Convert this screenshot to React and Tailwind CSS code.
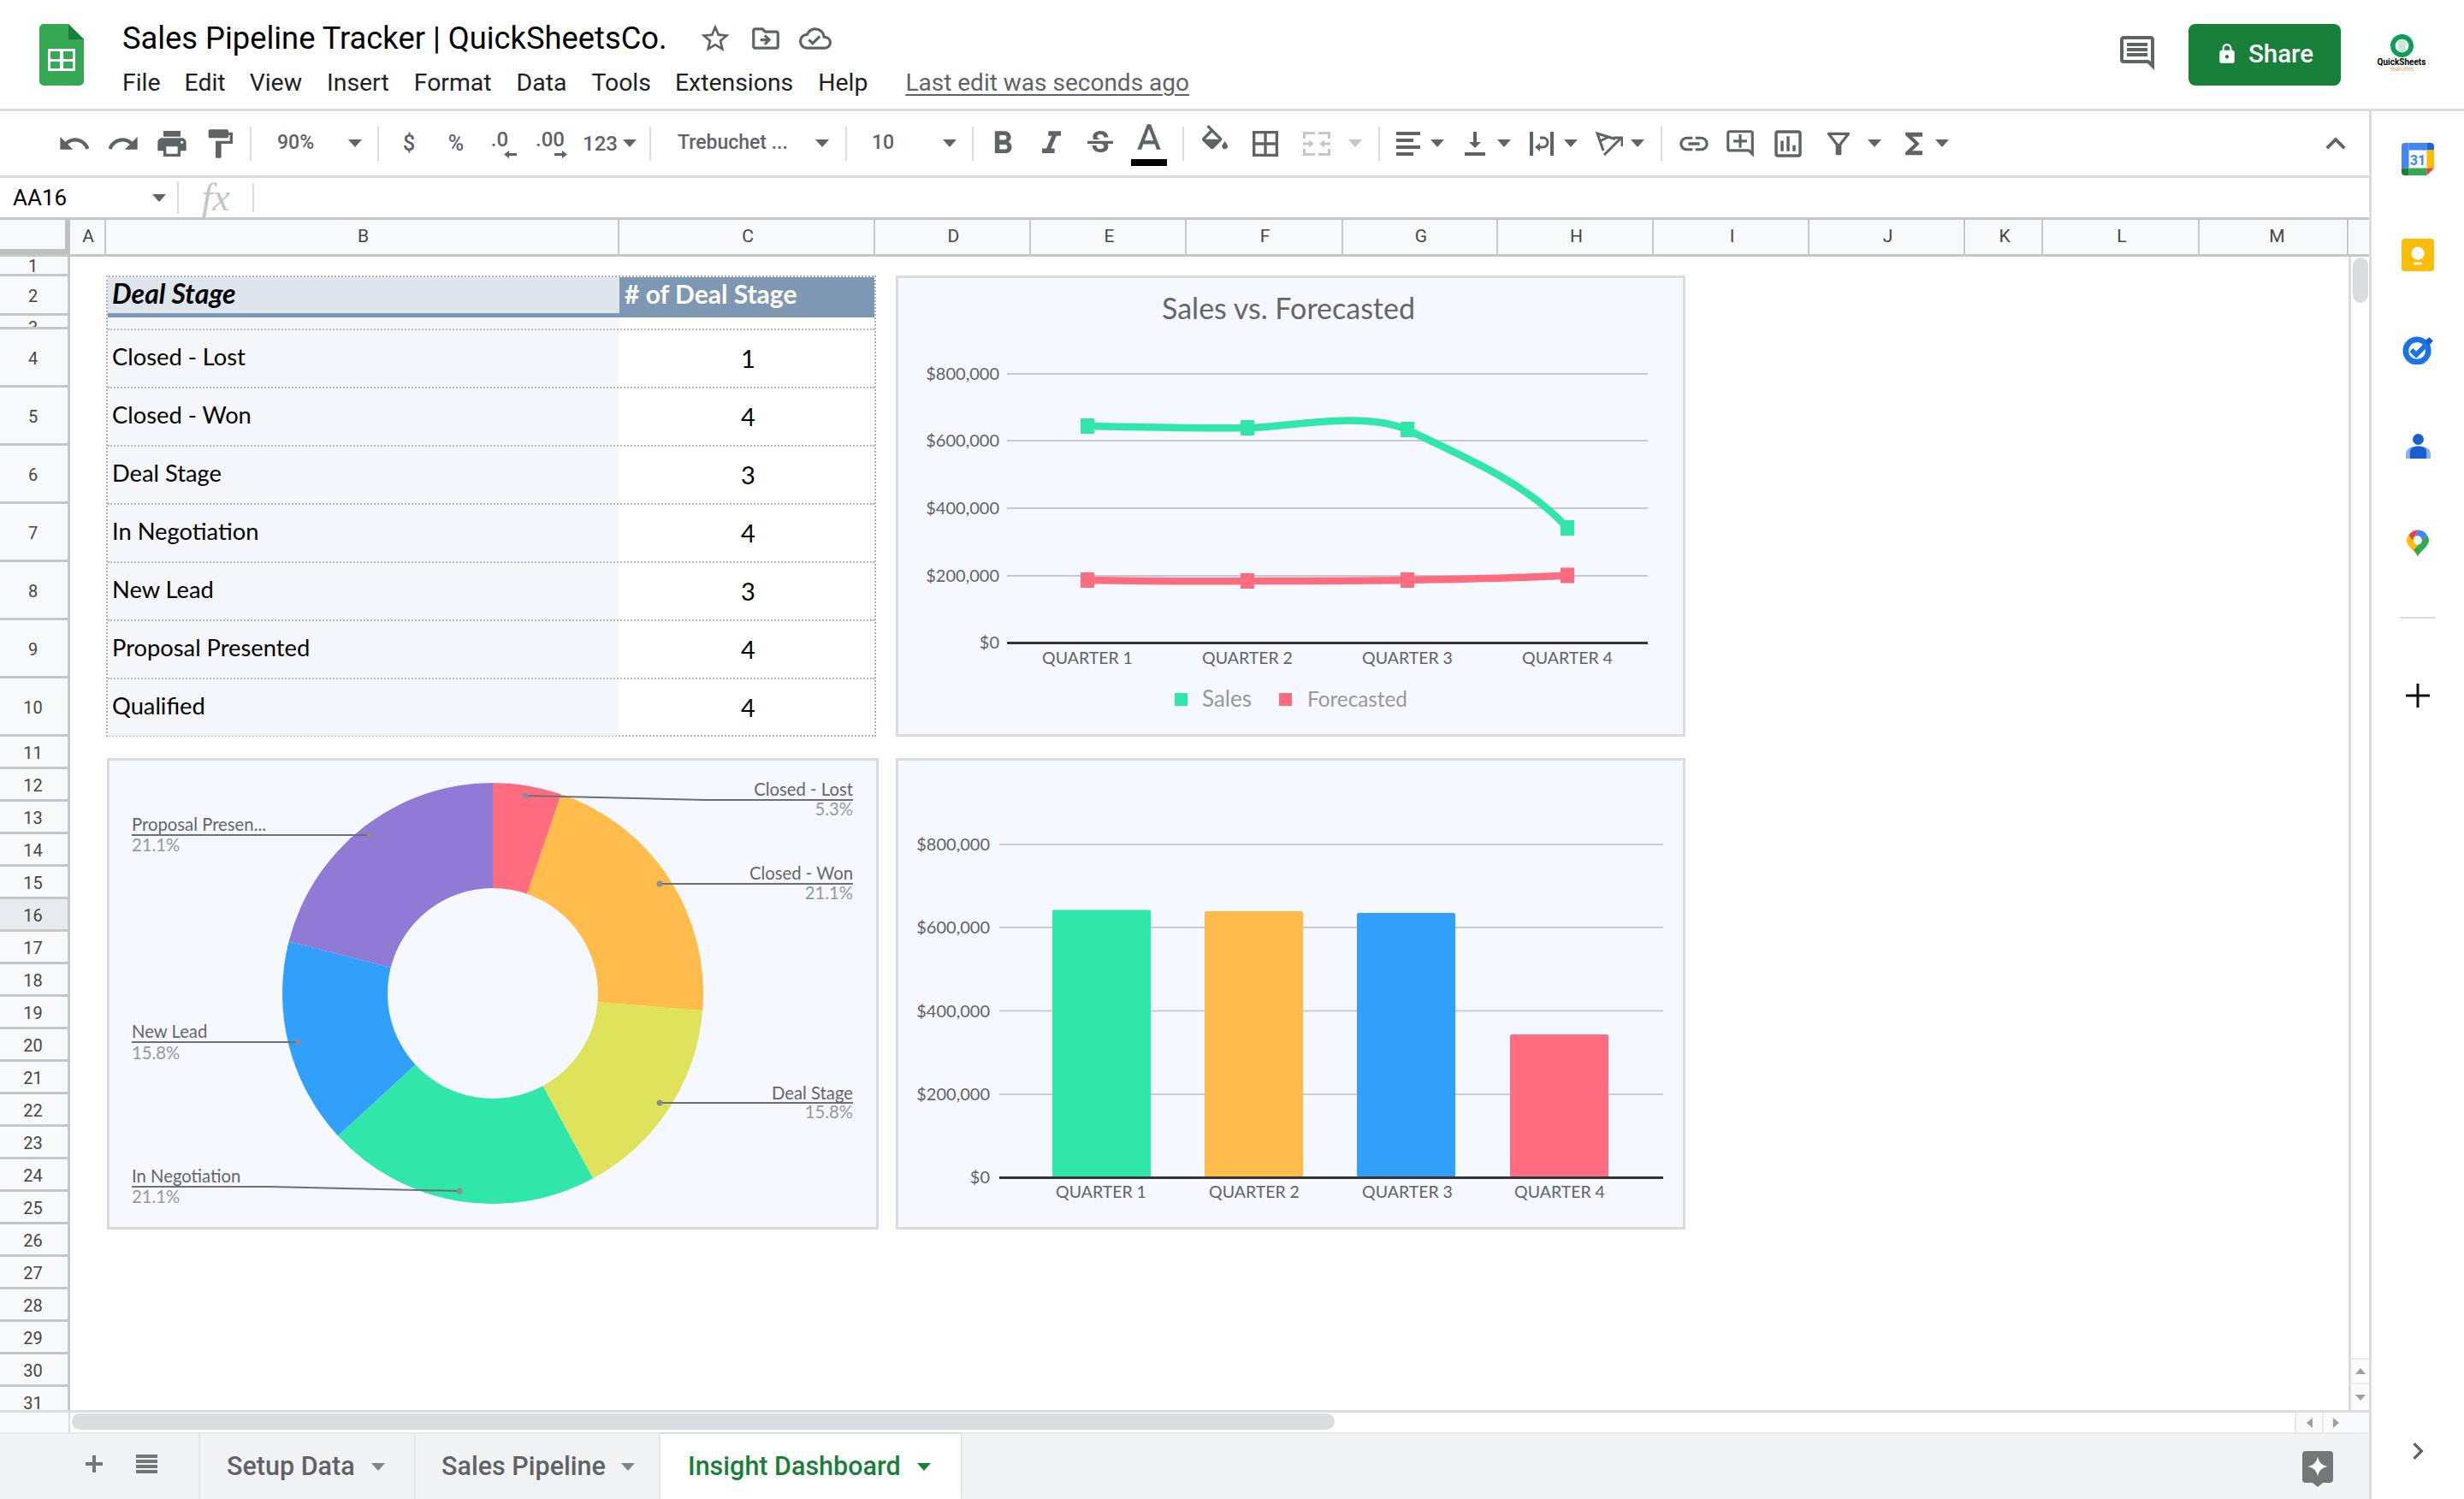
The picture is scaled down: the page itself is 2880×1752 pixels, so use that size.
import React from 'react';
import {
  MdUndo, MdRedo, MdPrint, MdFormatPaint, MdFormatBold, MdFormatItalic, MdStrikethroughS,
  MdBorderAll, MdLink,
  MdOutlineAddComment, MdOutlineInsertChart, MdOutlineFilterAlt, MdFunctions, MdStarBorder,
  MdOutlineDriveFileMove, MdOutlineCloudDone, MdOutlineComment, MdLock, MdExpandLess,
  MdChevronRight,
} from 'react-icons/md';

const GREEN = '#30e6a8';
const ORANGE = '#ffbc4a';
const BLUE = '#31a0fa';
const RED = '#ff6b7f';
const YELLOW = '#dfe35b';
const PURPLE = '#8f7bd6';

const columns = [
  { name: 'A', cls: 'w-[42px] pl-[2px]' },
  { name: 'B', cls: 'w-[600px] pl-[3px]' },
  { name: 'C', cls: 'w-[299px] pl-[3px]' },
  { name: 'D', cls: 'w-[182px] pl-[3px]' },
  { name: 'E', cls: 'w-[182px] pl-[3px]' },
  { name: 'F', cls: 'w-[183px] pl-[2px]' },
  { name: 'G', cls: 'w-[181px] pl-[3px]' },
  { name: 'H', cls: 'w-[182px] pl-[3px]' },
  { name: 'I', cls: 'w-[182px] pl-[3px]' },
  { name: 'J', cls: 'w-[182px] pl-[3px]' },
  { name: 'K', cls: 'w-[91px] pl-[3px]' },
  { name: 'L', cls: 'w-[183px] pl-[3px]' },
  { name: 'M', cls: 'w-[174px] pl-[9px]' },
];

const menus = [
  { name: 'File', cls: 'ml-0' },
  { name: 'Edit', cls: 'ml-[28px]' },
  { name: 'View', cls: 'ml-[28px]' },
  { name: 'Insert', cls: 'ml-[29px]' },
  { name: 'Format', cls: 'ml-[29px]' },
  { name: 'Data', cls: 'ml-[29px]' },
  { name: 'Tools', cls: 'ml-[29px]' },
  { name: 'Extensions', cls: 'ml-[28px]' },
  { name: 'Help', cls: 'ml-[29px]' },
];

const rows = [
  ['Closed - Lost', 1],
  ['Closed - Won', 4],
  ['Deal Stage', 3],
  ['In Negotiation', 4],
  ['New Lead', 3],
  ['Proposal Presented', 4],
  ['Qualified', 4],
];

const rowHeight = (n) => {
  if (n === 1) return 'h-[23px]';
  if (n === 2) return 'h-[46px]';
  if (n === 3) return 'h-[16px] items-start';
  if (n >= 4 && n <= 10) return 'h-[68px]';
  return 'h-[38px]';
};

const Caret = ({ className = '', color = '#5f6368' }) => (
  <svg width="16" height="9" viewBox="0 0 16 9" className={`shrink-0 ${className}`}>
    <path d="M0 0h16L8 9z" fill={color} />
  </svg>
);

const Sep = ({ className = '' }) => <div className={`h-[40px] w-[2px] shrink-0 bg-[#dadce0] ${className}`} />;

const Slot = ({ className, children }) => (
  <div className={`flex h-[44px] shrink-0 items-center justify-center text-[#5f6368] ${className}`}>{children}</div>
);

const Dropdown = ({ className, children }) => (
  <div className={`flex shrink-0 items-center justify-between text-[23px] font-medium text-[#5f6368] ${className}`}>
    <span>{children}</span>
    <Caret />
  </div>
);

const DecimalArrow = ({ flip }) => (
  <svg width="15" height="9" viewBox="0 0 15 9" className={`ml-[25px] ${flip ? 'rotate-180' : ''}`}>
    <path d="M0 4.500L6 0v3h9v3H6v3z" fill="#5f6368" />
  </svg>
);

const SheetsLogo = () => (
  <svg width="52" height="72" viewBox="0 0 52 72" className="shrink-0">
    <path d="M5 0h29l18 18v49a5 5 0 0 1-5 5H5a5 5 0 0 1-5-5V5a5 5 0 0 1 5-5z" fill="#34a853" />
    <path d="M34 0l18 18H34z" fill="#188038" />
    <path d="M10 29h32v26H10z" fill="#fff" />
    <path d="M13 32h11v9H13zM28 32h11v9H28zM13 44h11v8H13zM28 44h11v8H28z" fill="#34a853" />
  </svg>
);

const CalendarIcon = () => (
  <svg width="38" height="38" viewBox="0 0 40 40">
    <path d="M9 0h22v9H9z" fill="#4285f4" />
    <path d="M0 4a4 4 0 0 1 4-4h5v31H0z" fill="#4285f4" />
    <path d="M31 0h5a4 4 0 0 1 4 4v5h-9z" fill="#1967d2" />
    <path d="M31 9h9v22h-9z" fill="#fbbc04" />
    <path d="M9 31h22v9H9z" fill="#34a853" />
    <path d="M0 31h9v9H4a4 4 0 0 1-4-4z" fill="#188038" />
    <path d="M31 31h9l-9 9z" fill="#ea4335" />
    <text x="20" y="27" textAnchor="middle" fontSize="17" fontWeight="700" fill="#4285f4" className="font-['Roboto',sans-serif]">31</text>
  </svg>
);

const KeepIcon = () => (
  <svg width="38" height="38" viewBox="0 0 40 40">
    <rect width="40" height="40" rx="4" fill="#fbbc04" />
    <circle cx="20" cy="18" r="8" fill="#fff" />
    <path d="M15 29h10v3H15z" fill="#fff" />
  </svg>
);

const TasksIcon = () => (
  <svg width="36" height="34" viewBox="0 0 38 36">
    <circle cx="18" cy="19" r="14" fill="none" stroke="#1a73e8" strokeWidth="7" />
    <path d="M11 18l6 6 17-17" fill="none" stroke="#1a73e8" strokeWidth="6" />
    <path d="M27 8l6-6 5 5-6 6z" fill="#1a5fd0" />
  </svg>
);

const ContactsIcon = () => (
  <svg width="29" height="33" viewBox="0 0 36 36">
    <path d="M0 36v-6c0-8 6-12 18-12s18 4 18 12v6z" fill="#8ab0f5" />
    <circle cx="18" cy="8" r="8" fill="#1a5fd0" />
    <path d="M6 36V26c0-5 5-8 12-8s12 3 12 8v10z" fill="#1a5fd0" />
  </svg>
);

const MapsIcon = () => (
  <svg width="26" height="34" viewBox="0 0 32 38">
    <path d="M16 38C13 30 0 24 0 15 0 12 1 9 3 7l23 19c-4 4-8 7-10 12z" fill="#fbbc04" />
    <path d="M3 7C6 3 11 0 16 0l-5 10-3 4z" fill="#ea4335" />
    <path d="M16 0c5 0 10 2 13 7L21 17c1-5-2-9-5-9-2 0-4 1-5 2z" fill="#4285f4" />
    <path d="M29 7c2 2 3 5 3 8 0 9-13 15-16 23-1-3-3-6-6-9l19-22z" fill="#34a853" />
    <circle cx="16" cy="15" r="6" fill="#fff" />
  </svg>
);

const MergeIcon = () => (
  <svg width="32" height="28" viewBox="0 0 32 28" fill="#c4c7c5">
    <path d="M0 0h14v3H3v5H0zM18 0h14v8h-3V3H18zM0 20h3v5h11v3H0zM29 20h3v8H18v-3h11z" />
    <path d="M0 12.500h7v-3l6 4.500-6 4.500v-3H0zM32 12.500h-7v-3l-6 4.500 6 4.500v-3h7z" />
  </svg>
);

const AlignIcon = () => (
  <svg width="28" height="28" viewBox="0 0 28 28" fill="#5f6368">
    <path d="M0 0h28v4H0zM0 8h20v4H0zM0 16h28v4H0zM0 24h20v4H0z" />
  </svg>
);

const ValignIcon = () => (
  <svg width="24" height="28" viewBox="0 0 24 28" fill="#5f6368">
    <path d="M10 0h4v12h5l-7 7-7-7h5zM0 24h24v4H0z" />
  </svg>
);

const WrapIcon = () => (
  <svg width="28" height="28" viewBox="0 0 28 28">
    <path d="M0 0h4v28H0zM24 0h4v28h-4z" fill="#5f6368" />
    <path d="M12 7h3.500a5.500 5.500 0 0 1 0 11H10" fill="none" stroke="#5f6368" strokeWidth="3" />
    <path d="M6 18l6-5v10z" fill="#5f6368" />
  </svg>
);

const RotateIcon = () => (
  <svg width="32" height="28" viewBox="0 0 32 28" fill="none" stroke="#5f6368" strokeWidth="3">
    <path d="M23 8.500L2 2l7 20" />
    <path d="M5 11l10-5" />
    <path d="M10 27L30 7" />
    <path d="M21 7h10v10" />
  </svg>
);

const FillIcon = () => (
  <svg width="40" height="40" viewBox="0 0 24 24" fill="#5f6368" className="-mt-[4px]">
    <path d="M16.560 8.940L7.620 0 6.210 1.410l2.380 2.380-5.150 5.150c-.59.59-.59 1.540 0 2.120l5.500 5.500c.29.29.68.44 1.060.44s.77-.15 1.060-.44l5.500-5.500c.59-.58.59-1.530 0-2.120zM5.210 10L10 5.210 14.790 10H5.210zM19 11.500s-2 2.170-2 3.500c0 1.100.9 2 2 2s2-.9 2-2c0-1.330-2-3.500-2-3.500z" />
  </svg>
);

const TextColorIcon = () => (
  <div className="flex h-[52px] flex-col items-center justify-between">
    <svg width="38" height="38" viewBox="3 2 18 17" fill="#5f6368">
      <path d="M11 3L5.500 17h2.250l1.120-3h6.250l1.120 3h2.250L13 3h-2zm-1.380 9L12 5.670 14.380 12H9.620z" />
    </svg>
    <div className="h-[8px] w-[42px] bg-black" />
  </div>
);

const Sparkle = () => (
  <svg width="36" height="42" viewBox="0 0 36 42">
    <path d="M4 0h28a4 4 0 0 1 4 4v29a4 4 0 0 1-4 4h-8l-6 5-6-5H4a4 4 0 0 1-4-4V4a4 4 0 0 1 4-4z" fill="#747775" />
    <path d="M18 6c1 7 5 11 12 12-7 1-11 5-12 12-1-7-5-11-12-12 7-1 11-5 12-12z" fill="#fff" />
  </svg>
);

const Header = () => (
  <header className="flex h-[130px] shrink-0 items-start border-b-[3px] border-[#dadce0]">
    <div className="ml-[46px] mt-[28px]"><SheetsLogo /></div>
    <div className="ml-[45px] flex flex-col">
      <div className="mt-[22px] flex h-[46px] items-center">
        <span className="text-[36.300px] leading-none text-black">Sales Pipeline Tracker | QuickSheetsCo.</span>
        <div className="ml-[36px] flex items-center gap-[20px] text-[#5f6368]">
          <MdStarBorder size={40} />
          <MdOutlineDriveFileMove size={38} />
          <MdOutlineCloudDone size={38} />
        </div>
      </div>
      <div className="mt-[10px] flex h-[38px] items-center text-[28.400px] leading-none text-[#202124]">
        {menus.map((m) => (
          <span key={m.name} className={m.cls}>{m.name}</span>
        ))}
        <span className="ml-[44px] text-[28px] text-[#5f6368] underline underline-offset-[4px]">Last edit was seconds ago</span>
      </div>
    </div>
    <div className="ml-auto flex items-start">
      <div className="mr-[36px] mt-[38px] text-[#5f6368]"><MdOutlineComment size={48} /></div>
      <div className="mt-[28px] flex h-[72px] w-[178px] items-center justify-center gap-[12px] rounded-[8px] bg-[#188038] pb-[2px] text-[29.500px] font-medium text-white">
        <MdLock size={26} />
        <span>Share</span>
      </div>
      <div className="ml-[43px] mr-[45px] mt-[40px] flex w-[56px] flex-col items-center">
        <svg width="27" height="27" viewBox="0 0 24 24">
          <circle cx="12" cy="12" r="9.500" fill="#fff" stroke="#0f9d58" strokeWidth="5" />
          <rect x="8" y="6" width="8" height="12" rx="1" fill="#c9e8d6" />
        </svg>
        <span className="mt-[1px] whitespace-nowrap text-[10px] font-bold leading-[10px] text-black">QuickSheets</span>
        <span className="whitespace-nowrap text-[5px] leading-[6px] text-[#e08a4a]">TEMPLATES</span>
      </div>
    </div>
  </header>
);

const Toolbar = () => (
  <div className="flex h-[78px] shrink-0 items-center border-b-[3px] border-[#dadce0] pl-[58px] pr-[16px]">
    <Slot className="w-[57px]"><MdUndo size={40} /></Slot>
    <Slot className="w-[57px]"><MdRedo size={40} /></Slot>
    <Slot className="w-[57px]"><MdPrint size={40} /></Slot>
    <Slot className="w-[56px]"><MdFormatPaint size={40} /></Slot>
    <Sep className="ml-[7px]" />
    <Dropdown className="w-[147px] pl-[30px] pr-[18px]">90%</Dropdown>
    <Sep />
    <Slot className="ml-[7px] w-[56px] text-[25px] font-medium">$</Slot>
    <Slot className="w-[54px] text-[25px] font-medium">%</Slot>
    <Slot className="w-[48px] flex-col text-[24px] font-medium leading-[26px]">.0<DecimalArrow /></Slot>
    <Slot className="w-[70px] flex-col text-[24px] font-medium leading-[26px]">.00<DecimalArrow flip /></Slot>
    <Slot className="w-[72px] justify-start gap-[6px] pl-[3px] text-[24px] font-medium">123<Caret /></Slot>
    <Sep className="ml-[9px]" />
    <Dropdown className="w-[227px] pl-[31px] pr-[19px]">Trebuchet ...</Dropdown>
    <Sep />
    <Dropdown className="w-[146px] pl-[29px] pr-[18px]">10</Dropdown>
    <Sep />
    <Slot className="ml-[5px] w-[57px]"><MdFormatBold size={44} /></Slot>
    <Slot className="w-[57px]"><MdFormatItalic size={44} /></Slot>
    <Slot className="w-[57px]"><MdStrikethroughS size={40} /></Slot>
    <Slot className="w-[57px]"><TextColorIcon /></Slot>
    <Sep className="ml-[11px]" />
    <Slot className="ml-[6px] w-[59px]"><FillIcon /></Slot>
    <Slot className="w-[59px]"><MdBorderAll size={40} /></Slot>
    <Slot className="w-[61px]"><MergeIcon /></Slot>
    <Slot className="w-[30px]"><Caret color="#c4c7c5" /></Slot>
    <Sep className="ml-[12px]" />
    <Slot className="ml-[19px] gap-[12px]"><AlignIcon /><Caret /></Slot>
    <Slot className="ml-[24px] gap-[14px]"><ValignIcon /><Caret /></Slot>
    <Slot className="ml-[22px] gap-[12px]"><WrapIcon /><Caret /></Slot>
    <Slot className="ml-[21px] gap-[9px]"><RotateIcon /><Caret /></Slot>
    <Sep className="ml-[19px]" />
    <Slot className="ml-[17px]"><MdLink size={40} /></Slot>
    <Slot className="ml-[15px]"><MdOutlineAddComment size={38} /></Slot>
    <Slot className="ml-[16px]"><MdOutlineInsertChart size={42} /></Slot>
    <Slot className="ml-[18px] gap-[14px]"><MdOutlineFilterAlt size={40} /><Caret /></Slot>
    <Slot className="ml-[18px] gap-[5px]"><MdFunctions size={40} /><Caret /></Slot>
    <Slot className="ml-auto"><MdExpandLess size={46} /></Slot>
  </div>
);

const FormulaBar = () => (
  <div className="flex h-[46px] shrink-0 items-center">
    <div className="flex h-full w-[207px] items-center justify-between pl-[15px] pr-[13px] text-[26px] text-black">
      <span>AA16</span>
      <Caret />
    </div>
    <div className="h-[38px] w-[2px] bg-[#dadce0]" />
    <div className="flex w-[86px] justify-center font-['Liberation_Serif',serif] text-[46px] italic leading-none text-[#c4c7c5]">fx</div>
    <div className="h-[34px] w-[2px] bg-[#dadce0]" />
  </div>
);

const ColumnHeader = () => (
  <div className="flex h-[46px] shrink-0 border-y-[3px] border-[#c4c7c5] bg-[#f8f9fa]">
    <div className="h-full w-[82px] shrink-0 border-b-[6px] border-r-[6px] border-[#c0c0c0]" />
    {columns.map((c) => (
      <div key={c.name} className={`flex shrink-0 items-center justify-center border-r-2 border-[#c4c7c5] text-[21px] text-[#444746] ${c.cls}`}>
        {c.name}
      </div>
    ))}
  </div>
);

const RowHeader = () => (
  <div className="w-[82px] shrink-0 overflow-hidden border-r-[3px] border-[#c4c7c5] bg-[#f8f9fa]">
    {Array.from({ length: 31 }, (_, i) => i + 1).map((n) => (
      <div
        key={n}
        className={`flex justify-center overflow-hidden border-b-[3px] border-[#c4c7c5] pr-[2px] text-[20px] leading-none text-[#444746] ${n === 16 ? 'bg-[#e8eaed]' : ''} ${n === 3 ? 'pt-[4px]' : 'items-center pt-[2px]'} ${rowHeight(n)}`}
      >
        {n}
      </div>
    ))}
  </div>
);

const PivotTable = () => (
  <div className="h-[539px] w-[900px] shrink-0 border-2 border-dotted border-[#b0b0b0] font-['Lato',sans-serif] text-black">
    <div className="grid h-[47px] grid-cols-[598px_298px] border-b-[5px] border-[#7e97b2] font-bold leading-[38px]">
      <div className="bg-[#dfe5ed] pl-[5px] text-[32px] italic">Deal Stage</div>
      <div className="bg-[#7e97b2] pl-[6px] text-[30px] text-white">{'# of Deal Stage'}</div>
    </div>
    <div className="grid h-[13px] grid-cols-[598px_298px]">
      <div className="bg-[#f4f6f9]" />
      <div />
    </div>
    {rows.map(([label, count]) => (
      <div key={label} className="grid h-[68px] grid-cols-[598px_298px] border-t-2 border-dotted border-[#b7b7b7]">
        <div className="flex items-center bg-[#f4f6f9] pb-[3px] pl-[5px] text-[27.300px]">{label}</div>
        <div className="flex items-center justify-center pb-[1px] pl-[3px] text-[29px]">{count}</div>
      </div>
    ))}
  </div>
);

const axisLabel = ['$800,000', '$600,000', '$400,000', '$200,000', '$0'];
const quarters = ['QUARTER 1', 'QUARTER 2', 'QUARTER 3', 'QUARTER 4'];

const LineChartPanel = () => {
  const grid = [437, 515, 594, 673];
  const xs = [1271, 1458, 1645, 1832];
  const sales = [498, 500, 502, 617];
  const forecast = [678, 679, 678, 672.5];
  return (
    <div className="h-[539px] w-[923px] shrink-0 border-[3px] border-[#d8dbe0] bg-[#f5f8fe]">
      <svg width="917" height="533" viewBox="1050 325 917 533" className="block font-['Lato',sans-serif]">
        <text x="1506" y="373" textAnchor="middle" fontSize="34" fill="#666">Sales vs. Forecasted</text>
        {grid.map((y) => <rect key={y} x="1177" y={y - 1} width="749" height="2" fill="#c4c8d2" />)}
        <rect x="1177" y="750" width="749" height="3" fill="#333" />
        {axisLabel.map((t, i) => (
          <text key={t} x="1168" y={[437, 515, 594, 673, 751][i] + 7} textAnchor="end" fontSize="20" fill="#5f6368">{t}</text>
        ))}
        {quarters.map((t, i) => (
          <text key={t} x={xs[i]} y="776" textAnchor="middle" fontSize="19.500" fill="#5f6368">{t}</text>
        ))}
        <path d="M1271 498C1340 499 1400 501 1458 500C1510 499 1590 480 1645 502C1700 530 1780 560 1832 617" fill="none" stroke={GREEN} strokeWidth="8.500" />
        <path d="M1271 678C1340 679 1400 680 1458 679C1520 679 1580 679 1645 678C1710 677 1770 676 1832 672.500" fill="none" stroke={RED} strokeWidth="8.500" />
        {xs.map((x, i) => <rect key={x} x={x - 8} y={sales[i] - 9} width="16" height="18" fill={GREEN} />)}
        {xs.map((x, i) => <rect key={x} x={x - 8} y={forecast[i] - 9} width="16" height="18" fill={RED} />)}
        <rect x="1373" y="810" width="15" height="15" fill={GREEN} />
        <text x="1405" y="826" fontSize="26" fill="#999">Sales</text>
        <rect x="1495" y="810" width="15" height="15" fill={RED} />
        <text x="1528" y="826" fontSize="24.300" fill="#999">Forecasted</text>
      </svg>
    </div>
  );
};

const slices = [
  { value: 1, color: RED },
  { value: 4, color: ORANGE },
  { value: 3, color: YELLOW },
  { value: 4, color: GREEN },
  { value: 3, color: BLUE },
  { value: 4, color: PURPLE },
];

const donutPath = (start, end, cx, cy, r, r2) => {
  const pt = (rad, a) => [cx + rad * Math.sin(a), cy - rad * Math.cos(a)];
  const [x1, y1] = pt(r, start);
  const [x2, y2] = pt(r, end);
  const [x3, y3] = pt(r2, end);
  const [x4, y4] = pt(r2, start);
  return `M${x1} ${y1}A${r} ${r} 0 0 1 ${x2} ${y2}L${x3} ${y3}A${r2} ${r2} 0 0 0 ${x4} ${y4}Z`;
};

const callouts = [
  { name: 'Closed - Lost', pct: '5.3%', right: true, ty: 930, py: 953, line: 'M614 930L825 935H997', dot: [614, 930] },
  { name: 'Closed - Won', pct: '21.1%', right: true, ty: 1028, py: 1051, line: 'M771 1033H997', dot: [771, 1033] },
  { name: 'Deal Stage', pct: '15.8%', right: true, ty: 1285, py: 1307, line: 'M771 1289H997', dot: [771, 1289] },
  { name: 'In Negotiation', pct: '21.1%', right: false, ty: 1382, py: 1406, line: 'M154 1387H316L537 1392', dot: [537, 1392] },
  { name: 'New Lead', pct: '15.8%', right: false, ty: 1213, py: 1238, line: 'M154 1218H349', dot: [349, 1218] },
  { name: 'Proposal Presen...', pct: '21.1%', right: false, ty: 971, py: 995, line: 'M154 976H432', dot: [432, 976] },
];

const DonutPanel = () => {
  let acc = 0;
  const total = 19;
  return (
    <div className="h-[551px] w-[902px] shrink-0 border-[3px] border-[#d8dbe0] bg-[#f5f8fe]">
      <svg width="896" height="545" viewBox="128 889 896 545" className="block font-['Lato',sans-serif]">
        {slices.map((s) => {
          const start = (acc / total) * Math.PI * 2;
          acc += s.value;
          const end = (acc / total) * Math.PI * 2;
          return <path key={s.color} d={donutPath(start, end, 576, 1161, 246, 123)} fill={s.color} />;
        })}
        {callouts.map((c) => (
          <g key={c.name}>
            <path d={c.line} fill="none" stroke="#6b6f76" strokeWidth="2" />
            <circle cx={c.dot[0]} cy={c.dot[1]} r="3.500" fill="#8a8d93" />
            <text x={c.right ? 997 : 154} y={c.ty} textAnchor={c.right ? 'end' : 'start'} fontSize="20.300" fill="#666">{c.name}</text>
            <text x={c.right ? 997 : 154} y={c.py} textAnchor={c.right ? 'end' : 'start'} fontSize="20.300" fill="#999">{c.pct}</text>
          </g>
        ))}
      </svg>
    </div>
  );
};

const BarChartPanel = () => {
  const grid = [987, 1084, 1181.5, 1279];
  const bars = [
    { x: 1230, top: 1063.5, color: GREEN },
    { x: 1408, top: 1065, color: ORANGE },
    { x: 1586, top: 1067, color: BLUE },
    { x: 1765, top: 1209, color: RED },
  ];
  return (
    <div className="h-[551px] w-[923px] shrink-0 border-[3px] border-[#d8dbe0] bg-[#f5f8fe]">
      <svg width="917" height="545" viewBox="1050 889 917 545" className="block font-['Lato',sans-serif]">
        {grid.map((y) => <rect key={y} x="1168" y={y - 1} width="776" height="2" fill="#c9cdd7" />)}
        {bars.map((b) => <rect key={b.x} x={b.x} y={b.top} width="115" height={1376 - b.top} rx="2" fill={b.color} />)}
        <rect x="1168" y="1375" width="776" height="3" fill="#333" />
        {axisLabel.map((t, i) => (
          <text key={t} x="1157" y={[987, 1084, 1181.5, 1279, 1376][i] + 7} textAnchor="end" fontSize="20" fill="#5f6368">{t}</text>
        ))}
        {quarters.map((t, i) => (
          <text key={t} x={[1287, 1466, 1645, 1823][i]} y="1400" textAnchor="middle" fontSize="19.500" fill="#5f6368">{t}</text>
        ))}
      </svg>
    </div>
  );
};

const SheetBody = () => (
  <div className="flex h-[1348px] shrink-0 overflow-hidden">
    <RowHeader />
    <div className="flex-1 pl-[42px] pt-[22px]">
      <div className="flex gap-[23px]">
        <PivotTable />
        <LineChartPanel />
      </div>
      <div className="ml-[1px] mt-[25px] flex gap-[20px]">
        <DonutPanel />
        <BarChartPanel />
      </div>
    </div>
    <div className="flex w-[24px] shrink-0 flex-col border-l-[3px] border-[#dadce0]">
      <div className="mx-[2px] mt-[1px] h-[53px] w-[18px] rounded-[9px] bg-[#dadce0]" />
      <div className="mt-auto flex h-[31px] items-center justify-center border-y-2 border-[#e8eaed] bg-[#fbfbfb]">
        <svg width="12" height="7" viewBox="0 0 12 7"><path d="M0 7h12L6 0z" fill="#9aa0a6" /></svg>
      </div>
      <div className="flex h-[30px] items-center justify-center bg-[#fbfbfb]">
        <svg width="12" height="7" viewBox="0 0 12 7"><path d="M0 0h12L6 7z" fill="#9aa0a6" /></svg>
      </div>
    </div>
  </div>
);

const HorizontalScroll = () => (
  <div className="flex h-[26px] shrink-0 border-t-[3px] border-[#dadce0]">
    <div className="w-[82px] shrink-0 border-r-2 border-[#dadce0] bg-[#f8f9fa]" />
    <div className="ml-[2px] mt-[1px] h-[19px] w-[1476px] rounded-[10px] bg-[#dadce0]" />
    <div className="ml-auto flex h-[23px] w-[63px] shrink-0">
      <div className="flex w-[32px] items-center justify-center border-l-2 border-[#e8eaed] bg-[#fafafa]">
        <svg width="7" height="12" viewBox="0 0 7 12"><path d="M7 0v12L0 6z" fill="#9aa0a6" /></svg>
      </div>
      <div className="flex w-[31px] items-center justify-center border-l-2 border-[#e8eaed] bg-[#fafafa]">
        <svg width="7" height="12" viewBox="0 0 7 12"><path d="M0 0v12l7-6z" fill="#9aa0a6" /></svg>
      </div>
    </div>
    <div className="w-[24px] shrink-0 bg-[#f8f9fa]" />
  </div>
);

const TabBar = () => (
  <div className="flex h-[78px] shrink-0 items-stretch border-t-2 border-[#e8eaed] bg-[#f1f3f4] text-[30.500px] font-medium text-[#5f6368]">
    <div className="flex w-[232px] shrink-0 items-center pb-[6px] pl-[100px]">
      <svg width="20" height="20" viewBox="0 0 20 20"><path d="M8 0h4v8h8v4h-8v8H8v-8H0V8h8z" fill="#747775" /></svg>
      <svg width="25" height="22" viewBox="0 0 25 22" className="ml-[39px]">
        <path d="M0 0h25v4H0zM0 6h25v4H0zM0 12h25v4H0zM0 18h25v4H0z" fill="#747775" />
      </svg>
    </div>
    <div className="flex w-[252px] shrink-0 items-center gap-[19px] border-l-2 border-[#e4e6e8] pl-[31px]">
      <span>Setup Data</span>
      <Caret color="#80868b" />
    </div>
    <div className="flex w-[288px] shrink-0 items-center gap-[18px] border-l-2 border-[#e4e6e8] pl-[30px]">
      <span>Sales Pipeline</span>
      <Caret color="#80868b" />
    </div>
    <div className="flex w-[351px] shrink-0 items-center gap-[19px] bg-white pl-[32px] text-[#188038] shadow-[0_0_3px_rgba(60,64,67,0.25)]">
      <span>Insight Dashboard</span>
      <Caret color="#188038" />
    </div>
    <div className="ml-auto mr-[42px] mt-[20px]"><Sparkle /></div>
  </div>
);

const SidePanel = () => (
  <aside className="flex w-[111px] shrink-0 flex-col items-center border-l-[3px] border-[#dadce0] text-[#5f6368]">
    <div className="mt-[36px] flex h-[40px] items-center"><CalendarIcon /></div>
    <div className="mt-[72px] flex h-[40px] items-center"><KeepIcon /></div>
    <div className="mt-[71px] flex h-[40px] items-center"><TasksIcon /></div>
    <div className="mt-[72px] flex h-[40px] items-center"><ContactsIcon /></div>
    <div className="mt-[74px] flex h-[40px] items-center"><MapsIcon /></div>
    <div className="mt-[66px] h-[2px] w-[42px] bg-[#dadce0]" />
    <div className="mt-[76px]">
      <svg width="28" height="28" viewBox="0 0 28 28"><path d="M12.500 0h3v12.500H28v3H15.500V28h-3V15.500H0v-3h12.500z" fill="#111" /></svg>
    </div>
    <div className="mb-[36px] mt-auto"><MdChevronRight size={40} /></div>
  </aside>
);

export default function App() {
  return (
    <div className="flex h-[1752px] w-[2880px] flex-col overflow-hidden bg-white font-['Roboto',sans-serif]">
      <Header />
      <div className="flex min-h-0 flex-1">
        <main className="flex w-[2769px] shrink-0 flex-col">
          <Toolbar />
          <FormulaBar />
          <ColumnHeader />
          <SheetBody />
          <HorizontalScroll />
          <TabBar />
        </main>
        <SidePanel />
      </div>
    </div>
  );
}
